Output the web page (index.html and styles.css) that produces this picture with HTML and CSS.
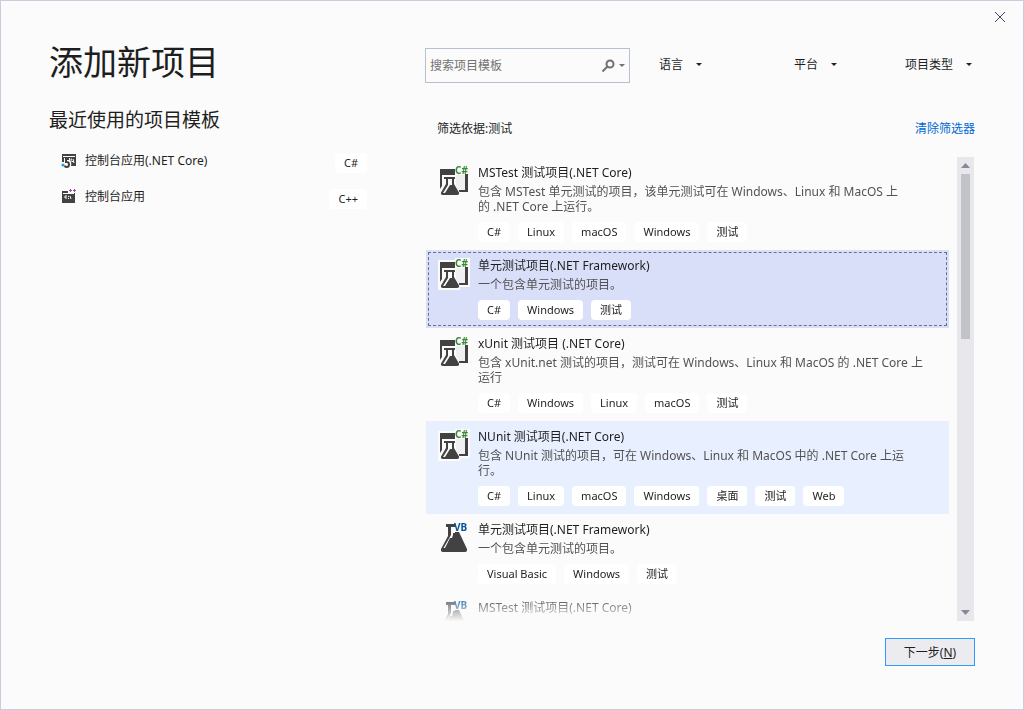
FILE: index.html
```
<!DOCTYPE html>
<html lang="zh-CN">
<head>
<meta charset="utf-8">
<title>添加新项目</title>
<link rel="stylesheet" href="styles.css">
</head>
<body>
<svg class="defs" aria-hidden="true">
  <symbol id="icon-cs" viewBox="0 0 32 32">
    <path class="halo" d="M0 2h17V0h15v29H22v3H0z"/>
    <path class="paper" d="M18 10h9v15h-7l-2-5z"/>
    <path class="ink" d="M2 4h15v6H2zM2 10h2v11l-2 3z"/>
    <path class="ink" d="M27 9h3v18h-9v-2h6z"/>
    <path class="halo" d="M5 10h13v5h-1v4l5 9v4H1v-4l6-9v-4H5z"/>
    <path class="ink" fill-rule="evenodd" d="M6 12h11v2h-1v5l5 8.500q.5 2.500-2 2.500H5q-2.500 0-2-2.500L8 19v-5H6zM10 14v6l-5 8h2l5-8h2v-6z"/>
    <text class="lang-cs" x="17" y="9">C#</text>
  </symbol>
  <symbol id="icon-vb" viewBox="0 0 32 32">
    <path class="ink" d="M8 2h9v8h4l8 17q.5 3-2 3H5q-2.500 0-2-3l7-13V5H8z"/>
    <path class="gloss" d="M13 5H17v6h-2v2l-1 3h-2l-5 10H5.500l7.500-13z"/>
    <text class="lang-vb" x="16" y="9">VB</text>
  </symbol>
</svg>
<main class="dialog">
  <div class="titlebar">
    <button class="close" type="button" aria-label="关闭">
      <svg width="12" height="12" viewBox="0 0 12 12"><path d="M1 1l10 10M11 1L1 11"/></svg>
    </button>
  </div>
  <div class="columns">
    <section class="recent">
      <h1>添加新项目</h1>
      <h2>最近使用的项目模板</h2>
      <ul class="recent-list">
        <li>
          <svg class="small-icon" width="16" height="16" viewBox="0 0 16 16">
            <path class="ink" d="M1 1h14v12H1z"/>
            <path class="gloss" d="M2 3h12v1H2z"/>
            <path class="cut" d="M3 5h6v3q2 1 1 5l-2 3H0V9h3z"/>
            <path class="num" d="M8 6H5v3h1q2 0 2 2.500T5.500 14Q4 14 4 12.500"/>
            <circle class="dot" cx="2" cy="12" r="1.500"/>
            <path class="white-line" d="M11 6h-1v3M12 6l1 4M11 8.500h2"/>
          </svg>
          <span class="recent-name">控制台应用(.NET Core)</span>
          <span class="tag">C#</span>
        </li>
        <li>
          <svg class="small-icon" width="16" height="16" viewBox="0 0 16 16">
            <path class="ink" d="M1 2h6v2h7v10H1z"/>
            <path class="gloss" d="M2 4h11v1H2z"/>
            <path class="white-line thin" d="M6 7H4v2h2M7.500 7v1M7.500 9v1M9 7l1 3"/>
            <path class="plus" d="M8 1.500h3M9.500 0v3M12 1.500h3M13.500 0v3"/>
          </svg>
          <span class="recent-name">控制台应用</span>
          <span class="tag">C++</span>
        </li>
      </ul>
    </section>
    <section class="browse">
      <div class="toolbar">
        <div class="search">
          <input type="search" placeholder="搜索项目模板" aria-label="搜索项目模板">
          <button type="button" aria-label="搜索">
            <svg width="14" height="14" viewBox="0 0 14 14"><circle cx="9" cy="5" r="3.500"/><path d="M6.500 7.500L1.500 12.500"/></svg>
          </button>
          <button type="button" aria-label="搜索选项">
            <svg class="caret" width="6" height="3" viewBox="0 0 6 3"><path d="M0 0h6L3 3z"/></svg>
          </button>
        </div>
        <div class="filters">
          <div class="filter"><select aria-label="语言"><option>语言</option></select><svg class="caret" width="6" height="3" viewBox="0 0 6 3"><path d="M0 0h6L3 3z"/></svg></div>
          <div class="filter"><select aria-label="平台"><option>平台</option></select><svg class="caret" width="6" height="3" viewBox="0 0 6 3"><path d="M0 0h6L3 3z"/></svg></div>
          <div class="filter"><select aria-label="项目类型"><option>项目类型</option></select><svg class="caret" width="6" height="3" viewBox="0 0 6 3"><path d="M0 0h6L3 3z"/></svg></div>
        </div>
      </div>
      <div class="filter-info"><span>筛选依据:测试</span><a href="#">清除筛选器</a></div>
      <div class="results">
        <ul class="templates">
          <li class="template">
            <svg class="icon"><use href="#icon-cs"/></svg>
            <div class="body">
              <h3>MSTest 测试项目(.NET Core)</h3>
              <p>包含 MSTest 单元测试的项目，该单元测试可在 Windows、Linux 和 MacOS 上<br>的 .NET Core 上运行。</p>
              <div class="tags"><span class="tag">C#</span><span class="tag">Linux</span><span class="tag">macOS</span><span class="tag">Windows</span><span class="tag">测试</span></div>
            </div>
          </li>
          <li class="template selected">
            <svg class="icon"><use href="#icon-cs"/></svg>
            <div class="body">
              <h3>单元测试项目(.NET Framework)</h3>
              <p>一个包含单元测试的项目。</p>
              <div class="tags"><span class="tag">C#</span><span class="tag">Windows</span><span class="tag">测试</span></div>
            </div>
          </li>
          <li class="template">
            <svg class="icon"><use href="#icon-cs"/></svg>
            <div class="body">
              <h3>xUnit 测试项目 (.NET Core)</h3>
              <p>包含 xUnit.net 测试的项目，测试可在 Windows、Linux 和 MacOS 的 .NET Core 上<br>运行</p>
              <div class="tags"><span class="tag">C#</span><span class="tag">Windows</span><span class="tag">Linux</span><span class="tag">macOS</span><span class="tag">测试</span></div>
            </div>
          </li>
          <li class="template hovered">
            <svg class="icon"><use href="#icon-cs"/></svg>
            <div class="body">
              <h3>NUnit 测试项目(.NET Core)</h3>
              <p>包含 NUnit 测试的项目，可在 Windows、Linux 和 MacOS 中的 .NET Core 上运<br>行。</p>
              <div class="tags"><span class="tag">C#</span><span class="tag">Linux</span><span class="tag">macOS</span><span class="tag">Windows</span><span class="tag">桌面</span><span class="tag">测试</span><span class="tag">Web</span></div>
            </div>
          </li>
          <li class="template">
            <svg class="icon"><use href="#icon-vb"/></svg>
            <div class="body">
              <h3>单元测试项目(.NET Framework)</h3>
              <p>一个包含单元测试的项目。</p>
              <div class="tags"><span class="tag">Visual Basic</span><span class="tag">Windows</span><span class="tag">测试</span></div>
            </div>
          </li>
          <li class="template">
            <svg class="icon"><use href="#icon-vb"/></svg>
            <div class="body">
              <h3>MSTest 测试项目(.NET Core)</h3>
            </div>
          </li>
        </ul>
        <div class="scrollbar">
          <button type="button" aria-label="向上滚动"><svg width="9" height="5" viewBox="0 0 9 5"><path d="M0 5h9L4.500 0z"/></svg></button>
          <div class="track"><div class="thumb"></div></div>
          <button type="button" aria-label="向下滚动"><svg width="9" height="5" viewBox="0 0 9 5"><path d="M0 0h9L4.500 5z"/></svg></button>
        </div>
      </div>
      <div class="actions"><button class="next" type="button">下一步(<u>N</u>)</button></div>
    </section>
  </div>
</main>
</body>
</html>
```
FILE: styles.css
```
* { box-sizing: border-box; }
body, h1, h2, h3, p, ul { margin: 0; padding: 0; }
ul { list-style: none; }
h1, h2, h3 { font-weight: 400; }
body, button, input, select {
  font-family: "Noto Sans", "Noto Sans CJK SC", sans-serif;
  font-size: 12px;
  color: #1e1e1e;
}
button {
  display: flex;
  align-items: center;
  justify-content: center;
  padding: 0;
  border: 0;
  background: none;
}
.defs { display: none; }

.dialog {
  display: flex;
  flex-direction: column;
  height: 100vh;
  padding: 0 48px 43px;
  border: 1px solid #ccccdc;
  background: #fbfbfb;
}
.titlebar {
  display: flex;
  justify-content: flex-end;
  height: 32px;
  margin-right: -32px;
}
.close { width: 14px; height: 32px; }
.close path { stroke: #3f4254; stroke-width: 1; }

.columns {
  display: grid;
  grid-template-columns: 318px minmax(0, 1fr);
  grid-template-rows: minmax(0, 1fr);
  gap: 58px;
  flex: 1;
  min-height: 0;
}

h1 { font-size: 34px; line-height: 58px; }
h2 { margin-top: 14px; font-size: 19px; line-height: 30px; }
.recent-list { padding-left: 12px; margin-top: 8px; }
.recent-list li { display: flex; height: 36px; padding-top: 10px; }
.small-icon { flex: none; }
.recent-name { flex: 1; margin-left: 8px; line-height: 16px; }

.tag {
  height: 20px;
  padding: 0 9px;
  border-radius: 4px;
  background: #fff;
  font-size: 11px;
  line-height: 20px;
  white-space: nowrap;
}

.browse { display: flex; flex-direction: column; min-height: 0; }
.toolbar { display: flex; align-items: center; margin-top: 15px; }
.search {
  display: flex;
  width: 205px;
  height: 35px;
  padding-left: 4px;
  border: 1px solid #b7bfd2;
}
.search input {
  flex: 1;
  min-width: 0;
  padding: 0;
  border: 0;
  outline: 0;
  background: none;
}
.search input::placeholder { color: #717171; opacity: 1; }
.search button { width: 14px; }
.search circle, .search button:first-of-type path { fill: none; stroke: #717171; stroke-width: 2; }
.search .caret { fill: #717171; }
.filters {
  display: grid;
  grid-template-columns: 135fr 111fr 70fr;
  flex: 1;
  margin-left: 29px;
  padding-bottom: 2px;
}
.filter { display: flex; align-items: center; }
.filter select {
  appearance: none;
  margin-right: 12px;
  padding: 0;
  border: 0;
  background: none;
}
.filter .caret { flex: none; fill: #1b2440; }

.filter-info {
  display: flex;
  justify-content: space-between;
  margin-top: 37px;
  padding-left: 12px;
  line-height: 18px;
}
.filter-info a { color: #0068d4; text-decoration: none; }

.results { display: flex; flex: 1; gap: 8px; min-height: 0; margin: 19px 1px 0; }
.templates {
  flex: 1;
  min-width: 0;
  overflow: hidden;
  mask-image: linear-gradient(to top, transparent, #000 28px);
}
.template { display: flex; gap: 8px; padding: 7px 12px 8px; }
.template.selected { background: #dadff9; outline: 1px dashed #6c7086; outline-offset: -3px; }
.template.hovered { background: #e8efff; }
.icon { flex: none; width: 32px; height: 32px; margin-top: 1px; }
.body { flex: 1; min-width: 0; }
h3 { font-size: 12px; line-height: 18px; }
.template p { margin: 2px 0 8px; color: #525252; line-height: 15px; white-space: nowrap; }
.tags { display: flex; gap: 8px; }

.ink { fill: #424242; }
.paper { fill: #f0eff1; }
.halo, .gloss, .cut { fill: #fbfbfb; }
.lang-cs, .lang-vb { font: bold 10px "Noto Sans", sans-serif; }
.lang-cs { fill: #388a34; }
.lang-vb { fill: #00539c; }
.num { fill: none; stroke: #424242; stroke-width: 2; }
.dot { fill: #1ba1e2; }
.white-line { fill: none; stroke: #fbfbfb; stroke-width: 1; }
.plus { fill: none; stroke: #9b4f96; stroke-width: 1; }

.scrollbar { display: flex; flex-direction: column; width: 17px; background: #e8e8ec; }
.scrollbar button { height: 17px; }
.scrollbar svg { fill: #868999; }
.track { flex: 1; padding: 0 4px; }
.thumb { height: 38.4%; background: #c2c3c9; }

.actions { display: flex; justify-content: flex-end; margin-top: 17px; }
.next {
  width: 90px;
  height: 28px;
  border: 1px solid #3399ff;
  background: #ececf0;
}
```
